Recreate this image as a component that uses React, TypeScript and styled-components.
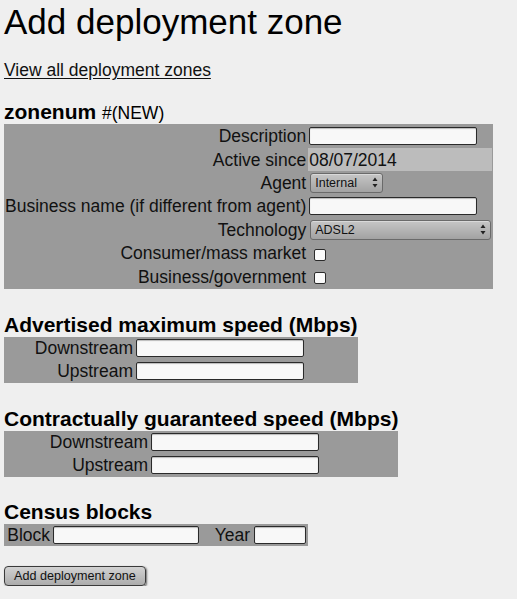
import React from "react";
import styled, { createGlobalStyle } from "styled-components";

const GlobalStyle = createGlobalStyle`
  html, body {
    margin: 0;
    padding: 0;
    background: #efefef;
  }
  body {
    font-family: "Liberation Sans", Arial, sans-serif;
    font-size: 17.5px;
    color: #111;
  }
`;

const Page = styled.div`
  display: flex;
  flex-direction: column;
  align-items: flex-start;
  padding: 2px 0 0 4px;
`;

const Title = styled.h1`
  margin: 0;
  font-size: 35px;
  font-weight: normal;
  line-height: 40px;
  color: #000;
`;

const BackLink = styled.a`
  margin-top: 18px;
  line-height: 20px;
  color: #111;
  text-decoration: underline;
  text-underline-offset: 2px;
`;

const Section = styled.section<{ $top: number }>`
  display: inline-flex;
  flex-direction: column;
  margin-top: ${(p) => p.$top}px;
`;

const Caption = styled.h3`
  margin: 0;
  font-size: 21px;
  font-weight: bold;
  line-height: 24px;
  color: #000;
  white-space: nowrap;
`;

const Tag = styled.span`
  font-size: 17.5px;
  font-weight: normal;
  line-height: 1;
`;

const Panel = styled.div<{ $cols: string; $row: number }>`
  display: grid;
  grid-template-columns: ${(p) => p.$cols};
  grid-auto-rows: ${(p) => p.$row}px;
  gap: 1px;
  padding: 1px;
  background: #9a9a9a;
`;

const Label = styled.div`
  display: flex;
  align-items: center;
  justify-content: flex-end;
  padding: 0 1px 0 0;
  line-height: 20px;
  white-space: nowrap;
`;

const Field = styled.div<{ $shade?: boolean }>`
  display: flex;
  align-items: center;
  padding: 0 1px;
  line-height: 20px;
  background: ${(p) => (p.$shade ? "#bcbcbc" : "transparent")};
`;

const TextInput = styled.input<{ $w: number; $shift?: number }>`
  box-sizing: border-box;
  width: ${(p) => p.$w}px;
  height: 18px;
  margin: 0 0 0 ${(p) => p.$shift || 0}px;
  padding: 0 3px;
  border: 1px solid #2a2a2a;
  border-radius: 2px;
  background: #f8f8f8;
  box-shadow: inset 0 1px 1px rgba(0, 0, 0, 0.25);
  font-family: inherit;
  font-size: 13px;
`;

const SelectBox = styled.div<{ $w: number }>`
  box-sizing: border-box;
  width: ${(p) => p.$w}px;
  height: 20px;
  margin-left: 1px;
  display: flex;
  align-items: center;
  justify-content: space-between;
  padding: 0 4px 0 4px;
  border: 1px solid #6a6a6a;
  border-radius: 3px;
  background: linear-gradient(#c6c6c6, #a2a2a2);
  box-shadow: inset 0 1px 0 rgba(255, 255, 255, 0.35);
  font-size: 12.5px;
  line-height: 1;
  color: #111;
`;

const Check = styled.input`
  appearance: none;
  box-sizing: border-box;
  width: 12px;
  height: 12px;
  margin: 3px 0 0 5px;
  border: 1px solid #2a2a2a;
  border-radius: 2px;
  background: #fafafa;
`;

const SubmitButton = styled.button`
  margin-top: 20px;
  height: 20px;
  padding: 0 9px;
  font-family: inherit;
  font-size: 12.6px;
  color: #111;
  border: 1px solid #3a3a3a;
  border-radius: 4px;
  background: linear-gradient(#d2d2d2, #acacac);
  box-shadow: 1px 1px 2px rgba(0, 0, 0, 0.55);
`;

const Arrows = () => (
  <svg width="6" height="11" viewBox="0 0 6 11">
    <path d="M3 0.5 L5.5 4 H0.5 Z" fill="#222" />
    <path d="M3 10.5 L5.5 7 H0.5 Z" fill="#222" />
  </svg>
);

const Select = ({ value, width }: { value: string; width: number }) => (
  <SelectBox $w={width}>
    <span>{value}</span>
    <Arrows />
  </SelectBox>
);

const SpeedSection = ({
  title,
  labelWidth,
  top,
}: {
  title: string;
  labelWidth: number;
  top: number;
}) => (
  <Section $top={top}>
    <Caption>{title}</Caption>
    <Panel $cols={`${labelWidth}px 1fr`} $row={21.5}>
      <Label>Downstream</Label>
      <Field>
        <TextInput $w={168} />
      </Field>
      <Label>Upstream</Label>
      <Field>
        <TextInput $w={168} />
      </Field>
    </Panel>
  </Section>
);

export default function App() {
  return (
    <Page>
      <GlobalStyle />
      <Title>Add deployment zone</Title>
      <BackLink href="#">View all deployment zones</BackLink>

      <Section $top={20}>
        <Caption>
          zonenum <Tag>#(NEW)</Tag>
        </Caption>
        <Panel $cols="auto 184px" $row={22.4}>
          <Label>Description</Label>
          <Field>
            <TextInput $w={168} />
          </Field>
          <Label>Active since</Label>
          <Field $shade>08/07/2014</Field>
          <Label>Agent</Label>
          <Field>
            <Select value="Internal" width={73} />
          </Field>
          <Label>Business name (if different from agent)</Label>
          <Field>
            <TextInput $w={168} />
          </Field>
          <Label>Technology</Label>
          <Field>
            <Select value="ADSL2" width={181} />
          </Field>
          <Label>Consumer/mass market</Label>
          <Field>
            <Check type="checkbox" />
          </Field>
          <Label>Business/government</Label>
          <Field>
            <Check type="checkbox" />
          </Field>
        </Panel>
      </Section>

      <SpeedSection title="Advertised maximum speed (Mbps)" labelWidth={129} top={24} />
      <SpeedSection title="Contractually guaranteed speed (Mbps)" labelWidth={144} top={24} />

      <Section $top={23}>
        <Caption>Census blocks</Caption>
        <Panel $cols="46px 148px 50px 55px" $row={20.7}>
          <Label>Block</Label>
          <Field>
            <TextInput $w={146} />
          </Field>
          <Label>Year</Label>
          <Field>
            <TextInput $w={52} $shift={1} />
          </Field>
        </Panel>
      </Section>

      <SubmitButton type="button">Add deployment zone</SubmitButton>
    </Page>
  );
}
